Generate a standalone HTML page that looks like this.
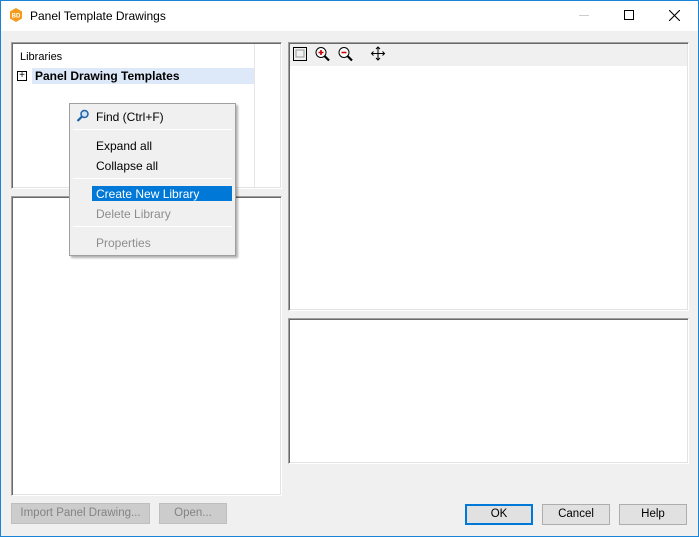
<!DOCTYPE html>
<html><head><style>
*{box-sizing:border-box;margin:0;padding:0}
body{width:699px;height:537px;overflow:hidden;font-family:"Liberation Sans",sans-serif;font-size:12px;background:#f0f0f0;position:relative}
.win{position:absolute;left:0;top:0;width:699px;height:537px;background:#f0f0f0}
.frame{position:absolute;left:0;top:0;width:699px;height:537px;border:1px solid #1883d7;pointer-events:none}
.title{position:absolute;left:0;top:0;width:699px;height:31px;background:#fff}
.abs{position:absolute}
.sunk{position:absolute;border:1px solid #a0a0a0;border-right-color:#fff;border-bottom-color:#fff;box-shadow:inset 1px 1px 0 #696969,inset -1px -1px 0 #e3e3e3;background:#fff}
.btn{position:absolute;height:21px;border:1px solid #adadad;background:#e1e1e1;text-align:center;line-height:19px;font-size:11.5px;color:#000}
.dis{background:#cccccc;border-color:#bfbfbf;color:#838383}
.menu{position:absolute;left:69px;top:103px;width:167px;height:153px;background:#f0f0f0;border:1px solid #a0a0a0;box-shadow:2px 2px 2px rgba(0,0,0,.3)}
.mi{position:absolute;left:26px;font-size:12px}
.sep{position:absolute;left:3px;right:3px;height:1px;background:#a0a0a0;border-bottom:1px solid #fff}
</style></head><body>
<div class="win">
<div class="title">
 <svg class="abs" style="left:9px;top:8px" width="14" height="14"><polygon points="7,0 13,3.5 13,10.5 7,14 1,10.5 1,3.5" fill="#f59a1b"/><text x="7" y="9.5" font-size="6" fill="#fff" text-anchor="middle" font-family="Liberation Sans" font-weight="bold">BD</text></svg>
 <div class="abs" style="left:30px;top:9px;font-size:12px">Panel Template Drawings</div>
 <div class="abs" style="left:579px;top:15px;width:10px;height:1px;background:#ccc"></div>
 <div class="abs" style="left:624px;top:10px;width:10px;height:10px;border:1px solid #000"></div>
 <svg class="abs" style="left:669px;top:10px" width="11" height="11"><path d="M0 0L11 11M11 0L0 11" stroke="#000" stroke-width="1.1"/></svg>
</div>
<div class="sunk" style="left:11px;top:42px;width:271px;height:147px">
 <div class="abs" style="left:242px;top:1px;width:1px;height:143px;background:#e5e5e5"></div>
 <div class="abs" style="left:8px;top:8px;font-size:11px">Libraries</div>
 <div class="abs" style="left:20px;top:25px;width:222px;height:16px;background:#dde8f8"></div>
 <div class="abs" style="left:5px;top:28px;width:10px;height:10px;border:1px solid #000;font-size:10px;line-height:8px;text-align:center">+</div>
 <div class="abs" style="left:23px;top:26px;font-weight:bold;font-size:12px">Panel Drawing Templates</div>
</div>
<div class="sunk" style="left:11px;top:196px;width:271px;height:300px"></div>
<div class="sunk" style="left:288px;top:42px;width:401px;height:269px">
 <div class="abs" style="left:1px;top:1px;width:397px;height:22px;background:#f0f0f0"></div>
 <svg class="abs" style="left:3px;top:3px" width="100" height="18">
  <rect x="1.5" y="1.5" width="13" height="13" fill="none" stroke="#000"/><rect x="4" y="4" width="8" height="7" fill="none" stroke="#999"/>
  <circle cx="29" cy="6.5" r="5" fill="#fff" stroke="#000"/><path d="M32.5 10L37 14.5" stroke="#000" stroke-width="2.2"/><path d="M26.5 6.5H31.5M29 4V9" stroke="#c00" stroke-width="1.6"/>
  <circle cx="52" cy="6.5" r="5" fill="#fff" stroke="#000"/><path d="M55.5 10L60 14.5" stroke="#000" stroke-width="2.2"/><path d="M49.5 6.5H54.5" stroke="#c00" stroke-width="1.6"/>
  <path d="M86 1V14M79.5 7.5H92.5M84 3L86 1L88 3M84 12L86 14L88 12M81.5 5.5L79.5 7.5L81.5 9.5M90.5 5.5L92.5 7.5L90.5 9.5" stroke="#000" fill="none"/>
 </svg>
</div>
<div class="sunk" style="left:288px;top:318px;width:401px;height:146px"></div>
<div class="btn dis" style="left:11px;top:503px;width:139px">Import Panel Drawing...</div>
<div class="btn dis" style="left:159px;top:503px;width:68px">Open...</div>
<div class="btn" style="left:465px;top:504px;width:68px;border:2px solid #0078d7;line-height:17px">OK</div>
<div class="btn" style="left:542px;top:504px;width:68px">Cancel</div>
<div class="btn" style="left:619px;top:504px;width:68px">Help</div>
<div class="menu">
 <svg class="abs" style="left:6px;top:5px" width="14" height="14"><circle cx="8.5" cy="5" r="3.5" fill="#cfe3f7" stroke="#1f5fa8" stroke-width="1.5"/><path d="M6 7.5L1.5 12" stroke="#1f5fa8" stroke-width="2.2"/></svg>
 <div class="mi" style="top:6px">Find (Ctrl+F)</div>
 <div class="sep" style="top:25px"></div>
 <div class="mi" style="top:35px">Expand all</div>
 <div class="mi" style="top:55px">Collapse all</div>
 <div class="sep" style="top:74px"></div>
 <div class="abs" style="left:22px;top:82px;width:140px;height:15px;background:#0078d7"></div>
 <div class="mi" style="top:83px;color:#fff">Create New Library</div>
 <div class="mi" style="top:103px;color:#8d8d8d">Delete Library</div>
 <div class="sep" style="top:122px"></div>
 <div class="mi" style="top:132px;color:#8d8d8d">Properties</div>
</div>
</div>
<div class="frame"></div>
</body></html>
